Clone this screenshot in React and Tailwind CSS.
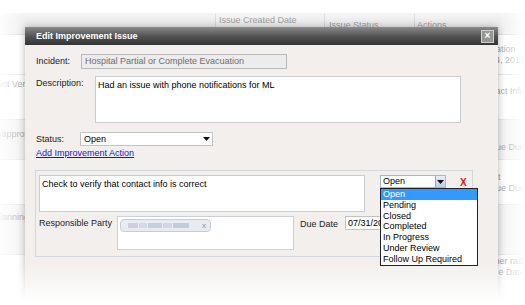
import React from "react";

const rows = [
  { h: 40, bg: "bg-white", left: [], lpt: 0, right: ["Information", "May 24, 2013"], rpt: 9 },
  { h: 45, bg: "bg-white", left: ["Plot Verification"], lpt: 4, right: ["Contact Info"], rpt: 11 },
  { h: 40, bg: "bg-[#f3f3f3]", left: ["Inappropriate"], lpt: 9, right: ["Due", "Overdue Due"], rpt: 11 },
  { h: 45, bg: "bg-white", left: [], lpt: 0, right: ["contact", "Overdue Due"], rpt: 12 },
  { h: 50, bg: "bg-[#f3f3f3]", left: ["Planning"], lpt: 7, right: [], rpt: 0 },
  { h: 50, bg: "bg-white", left: [], lpt: 0, right: ["other rad", "Due Date"], rpt: 1 },
];

const options = [
  "Open",
  "Pending",
  "Closed",
  "Completed",
  "In Progress",
  "Under Review",
  "Follow Up Required",
];

function Arrow() {
  return (
    <svg width="7" height="4" viewBox="0 0 7 4">
      <path d="M0 0 H7 L3.5 4 Z" fill="#111" />
    </svg>
  );
}

export default function App() {
  return (
    <div className="relative w-[525px] h-[305px] overflow-hidden bg-white font-['Liberation_Sans',Arial,sans-serif] text-[9px] leading-[11px]">
      {/* background table */}
      <div className="flex flex-col pt-[13px] text-[#9c9c9c]">
        <div className="flex h-[22px] bg-[#efefef] border-b border-[#dcdcdc]">
          <div className="w-[215px]" />
          <div className="w-[109px] border-l border-[#d8d8d8] pl-[3px] pt-[2px]">Issue Created Date</div>
          <div className="w-[90px] border-l border-[#d8d8d8] pl-[4px] pt-[7px]">Issue Status</div>
          <div className="flex-1 border-l border-[#d8d8d8] pl-[2px] pt-[7px]">Actions</div>
        </div>
        {rows.map((r, i) => (
          <div key={i} className={`flex border-b border-[#e6e6e6] ${r.bg}`} style={{ height: r.h }}>
            <div className="w-[496px] pl-[0px] whitespace-nowrap" style={{ paddingTop: r.lpt }}>
              {r.left.map((t) => (
                <div key={t} className="-ml-[6px]">{t}</div>
              ))}
            </div>
            <div className="flex-1 whitespace-nowrap" style={{ paddingTop: r.rpt }}>
              {r.right.map((t) => (
                <div key={t}>{t}</div>
              ))}
            </div>
          </div>
        ))}
      </div>

      {/* dialog */}
      <div className="absolute left-[25px] top-[27px] w-[473px] h-[285px] bg-[#f2efec] shadow-[0_0_8px_rgba(0,0,0,0.3)] flex flex-col">
        <div className="h-[18px] flex items-center justify-between bg-linear-to-b from-[#8a8a8a] via-[#555] to-[#333] pl-[11px] pr-[4px]">
          <span className="text-white font-bold text-[9px]">Edit Improvement Issue</span>
          <div className="w-[13px] h-[13px] bg-[#969696] border border-[#d0d0d0] flex items-center justify-center text-white font-bold text-[10px] leading-none">×</div>
        </div>
        <div className="flex flex-col pt-[9px] px-[11px] text-[#222]">
          <div className="flex items-center">
            <div className="w-[45px]">Incident:</div>
            <div className="w-[206px] h-[15px] border border-[#b9b9b9] bg-[#ececec] text-[#6e6e6e] pl-[3px] flex items-center">
              Hospital Partial or Complete Evacuation
            </div>
          </div>
          <div className="flex mt-[7px]">
            <div className="w-[59px] pt-[2px]">Description:</div>
            <div className="w-[366px] h-[47px] border border-[#c9cdd2] bg-white text-black px-[2px] pt-[3px]">
              Had an issue with phone notifications for ML
            </div>
          </div>
          <div className="flex items-center mt-[9px]">
            <div className="w-[44px]">Status:</div>
            <div className="w-[133px] h-[14px] border border-[#c3c3c3] bg-white text-black pl-[3px] pr-[2px] flex items-center justify-between">
              <span>Open</span>
              <Arrow />
            </div>
          </div>
          <div className="mt-[2px] text-[#1414e0] underline">Add Improvement Action</div>

          <div className="-ml-[1px] mt-[11px] w-[438px] h-[87px] border border-[#d3d8de] pt-[4px] pl-[3px] flex flex-col">
            <div className="flex items-start">
              <div className="w-[326px] h-[37px] border border-[#c9cdd2] bg-white text-black px-[2px] pt-[3px]">
                Check to verify that contact info is correct
              </div>
              <div className="relative ml-[15px] w-[66px] h-[13px] border border-[#a9b6c4] bg-white text-black flex items-center">
                <span className="pl-[2px] flex-1">Open</span>
                <div className="w-[10px] h-full border-l border-[#8da8c6] bg-linear-to-b from-[#e6eff8] to-[#b9cde2] flex items-center justify-center">
                  <Arrow />
                </div>
                <div className="absolute left-[-1px] top-[12px] w-[98px] border border-[#222] bg-white z-10 flex flex-col">
                  {options.map((o, i) => (
                    <div
                      key={o}
                      className={`h-[10.8px] leading-[10.8px] pl-[2px] ${i === 0 ? "bg-[#3399ff] text-white" : "text-black"}`}
                    >
                      {o}
                    </div>
                  ))}
                </div>
              </div>
              <div className="ml-[14px] mt-[2px] text-[#e81010] font-bold text-[10px]">X</div>
            </div>
            <div className="flex items-start mt-[4px]">
              <div className="w-[78px] pt-[2px]">Responsible Party</div>
              <div className="w-[177px] h-[34px] border border-[#c9d0da] bg-white pt-[2px] pl-[2px]">
                <div className="w-[91px] h-[13px] rounded-[4px] border border-[#c4ccd8] bg-[#e8ecf2] flex items-center pl-[7px] pr-[4px]">
                  <div className="flex gap-[1px] flex-1">
                    <div className="w-[10px] h-[5px] bg-[#c9d1de]" />
                    <div className="w-[8px] h-[5px] bg-[#d3dae5]" />
                    <div className="w-[14px] h-[5px] bg-[#c6cfdd]" />
                    <div className="w-[9px] h-[5px] bg-[#d0d7e2]" />
                    <div className="w-[16px] h-[5px] bg-[#c3ccda]" />
                  </div>
                  <span className="text-[#8a94a4] text-[8px]">x</span>
                </div>
              </div>
              <div className="ml-[6px] w-[45px] pt-[3px]">Due Date</div>
              <div className="w-[60px] h-[14px] border border-[#c3c3c3] bg-white text-black pl-[2px] flex items-center">07/31/2013</div>
            </div>
          </div>
        </div>
      </div>

      {/* vignette */}
      <div className="absolute left-0 right-0 top-0 h-[20px] bg-linear-to-b from-white to-transparent pointer-events-none" />
      <div className="absolute left-0 top-0 bottom-0 w-[26px] bg-linear-to-r from-white/90 to-transparent pointer-events-none" />
      <div className="absolute right-0 top-0 bottom-0 w-[26px] bg-linear-to-l from-white to-transparent pointer-events-none" />
      <div className="absolute left-0 right-0 bottom-0 h-[42px] bg-linear-to-t from-white from-10% to-transparent pointer-events-none" />
    </div>
  );
}
